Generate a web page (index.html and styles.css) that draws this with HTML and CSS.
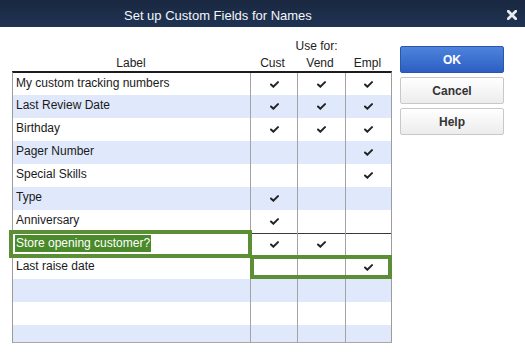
FILE: index.html
```html
<!DOCTYPE html>
<html lang="en">
<head>
<meta charset="utf-8">
<title>Set up Custom Fields for Names</title>
<link rel="stylesheet" href="styles.css">
</head>
<body>
<div class="dialog">
  <div class="titlebar">
    <span class="title">Set up Custom Fields for Names</span>
    <svg class="close" width="10" height="10" viewBox="0 0 10 10" aria-label="Close">
      <path d="M1.3 1.3 L8.7 8.7 M8.7 1.3 L1.3 8.7" stroke="#e8eaee" stroke-width="2.8" stroke-linecap="square"/>
    </svg>
  </div>
  <div class="main">
    <div class="table-wrap">
      <div class="head">
        <div class="usefor">Use for:</div>
        <div class="h-label">Label</div>
        <div class="h-col">Cust</div>
        <div class="h-col">Vend</div>
        <div class="h-col">Empl</div>
      </div>
      <div class="rows">
        <div class="row"><div class="cell label">My custom tracking numbers</div><div class="cell chk"><svg class="tick" viewBox="0 0 10 8"><path d="M1 4 L3.7 6.5 L9 1.3"/></svg></div><div class="cell chk"><svg class="tick" viewBox="0 0 10 8"><path d="M1 4 L3.7 6.5 L9 1.3"/></svg></div><div class="cell chk"><svg class="tick" viewBox="0 0 10 8"><path d="M1 4 L3.7 6.5 L9 1.3"/></svg></div></div>
        <div class="row alt"><div class="cell label">Last Review Date</div><div class="cell chk"><svg class="tick" viewBox="0 0 10 8"><path d="M1 4 L3.7 6.5 L9 1.3"/></svg></div><div class="cell chk"><svg class="tick" viewBox="0 0 10 8"><path d="M1 4 L3.7 6.5 L9 1.3"/></svg></div><div class="cell chk"><svg class="tick" viewBox="0 0 10 8"><path d="M1 4 L3.7 6.5 L9 1.3"/></svg></div></div>
        <div class="row"><div class="cell label">Birthday</div><div class="cell chk"><svg class="tick" viewBox="0 0 10 8"><path d="M1 4 L3.7 6.5 L9 1.3"/></svg></div><div class="cell chk"><svg class="tick" viewBox="0 0 10 8"><path d="M1 4 L3.7 6.5 L9 1.3"/></svg></div><div class="cell chk"><svg class="tick" viewBox="0 0 10 8"><path d="M1 4 L3.7 6.5 L9 1.3"/></svg></div></div>
        <div class="row alt"><div class="cell label">Pager Number</div><div class="cell chk"></div><div class="cell chk"></div><div class="cell chk"><svg class="tick" viewBox="0 0 10 8"><path d="M1 4 L3.7 6.5 L9 1.3"/></svg></div></div>
        <div class="row"><div class="cell label">Special Skills</div><div class="cell chk"></div><div class="cell chk"></div><div class="cell chk"><svg class="tick" viewBox="0 0 10 8"><path d="M1 4 L3.7 6.5 L9 1.3"/></svg></div></div>
        <div class="row alt"><div class="cell label">Type</div><div class="cell chk"><svg class="tick" viewBox="0 0 10 8"><path d="M1 4 L3.7 6.5 L9 1.3"/></svg></div><div class="cell chk"></div><div class="cell chk"></div></div>
        <div class="row"><div class="cell label">Anniversary</div><div class="cell chk"><svg class="tick" viewBox="0 0 10 8"><path d="M1 4 L3.7 6.5 L9 1.3"/></svg></div><div class="cell chk"></div><div class="cell chk"></div></div>
        <div class="row current"><div class="cell label sel-cell"><span class="selected">Store opening customer?</span></div><div class="cell chk"><svg class="tick" viewBox="0 0 10 8"><path d="M1 4 L3.7 6.5 L9 1.3"/></svg></div><div class="cell chk"><svg class="tick" viewBox="0 0 10 8"><path d="M1 4 L3.7 6.5 L9 1.3"/></svg></div><div class="cell chk"></div></div>
        <div class="row"><div class="cell label">Last raise date</div><div class="cell chk"></div><div class="cell chk"></div><div class="cell chk"><svg class="tick" viewBox="0 0 10 8"><path d="M1 4 L3.7 6.5 L9 1.3"/></svg></div></div>
        <div class="row alt"><div class="cell label"></div><div class="cell chk"></div><div class="cell chk"></div><div class="cell chk"></div></div>
        <div class="row"><div class="cell label"></div><div class="cell chk"></div><div class="cell chk"></div><div class="cell chk"></div></div>
        <div class="row alt last"><div class="cell label"></div><div class="cell chk"></div><div class="cell chk"></div><div class="cell chk"></div></div>
        <div class="mark mark-label"></div>
        <div class="mark mark-checks"></div>
      </div>
    </div>
    <div class="buttons">
      <button class="btn primary">OK</button>
      <button class="btn">Cancel</button>
      <button class="btn">Help</button>
    </div>
  </div>
</div>
</body>
</html>
```

FILE: styles.css
```css
html, body {
  margin: 0;
  padding: 0;
  background: #ffffff;
}

body {
  width: 525px;
  height: 361px;
  overflow: hidden;
  font-family: "Liberation Sans", Arial, sans-serif;
  font-size: 12px;
  color: #1a1a1a;
}

.dialog {
  width: 525px;
  height: 361px;
  background: #ffffff;
}

.titlebar {
  height: 27px;
  box-sizing: border-box;
  background: linear-gradient(#1a2840, #1f3353);
  display: flex;
  align-items: flex-start;
}

.title {
  margin-left: 124px;
  padding-top: 5px;
  line-height: 22px;
  font-size: 13px;
  color: #f4f6f9;
}

.close {
  margin-left: auto;
  margin-right: 8px;
  margin-top: 10px;
}

.main {
  display: flex;
  align-items: flex-start;
}

.table-wrap {
  margin-left: 12px;
  width: 380px;
}

.head {
  display: grid;
  grid-template-columns: 238px 47px 48px 47px;
  grid-template-rows: 18px 16px;
  padding-top: 10px;
  color: #222222;
}

.usefor {
  grid-column: 2 / span 3;
  grid-row: 1;
  text-align: center;
  line-height: 18px;
  padding-right: 9px;
}

.h-label,
.h-col {
  grid-row: 2;
  line-height: 16px;
  text-align: center;
}

.h-col {
  padding-right: 2px;
}

.rows {
  position: relative;
  border-top: 2px solid #1c1c1c;
  border-left: 1px solid #9c9c9c;
  border-right: 1px solid #9c9c9c;
  border-bottom: 1px solid #a8a8a8;
  height: 269px;
}

.row {
  display: grid;
  grid-template-columns: 237px 47px 48px 46px;
  height: 23px;
  background: #ffffff;
}

.row:first-child {
  height: 22px;
}

.row.alt {
  background: #e0e9fb;
}

.row.last {
  height: 17px;
}

.row.current {
  box-shadow: inset 0 1px 0 #3a3a3a;
}

.cell {
  box-sizing: border-box;
  line-height: 21px;
  white-space: nowrap;
  overflow: hidden;
}

.label {
  padding-left: 3px;
}

.row:first-child .label {
  line-height: 20px;
}

.chk {
  border-left: 1px solid #a3a3a3;
  display: flex;
  align-items: center;
  justify-content: center;
}

.tick {
  width: 9px;
  height: 7px;
  fill: none;
  stroke: #222222;
  stroke-width: 2.3;
  stroke-linecap: round;
  stroke-linejoin: miter;
}

.sel-cell {
  padding-top: 2px;
}

.selected {
  display: inline-block;
  vertical-align: top;
  line-height: 17px;
  margin-left: -1px;
  padding: 0 1px;
  background: #4a8a2a;
  color: #ffffff;
}

.mark {
  position: absolute;
  box-sizing: border-box;
  border: 4px solid #5b8e35;
}

.mark-label {
  left: -4px;
  top: 157px;
  width: 243px;
  height: 28px;
}

.mark-checks {
  left: 237px;
  top: 182px;
  width: 142px;
  height: 24px;
}

.buttons {
  margin-left: 8px;
  margin-top: 19px;
  display: flex;
  flex-direction: column;
  gap: 4px;
}

.btn {
  width: 104px;
  height: 27px;
  box-sizing: border-box;
  padding: 0;
  font-family: "Liberation Sans", Arial, sans-serif;
  font-size: 12px;
  font-weight: bold;
  color: #333333;
  background: linear-gradient(#ffffff, #ececec);
  border: 1px solid #c8c8c8;
  border-radius: 2px;
}

.btn.primary {
  color: #ffffff;
  background: linear-gradient(#4d84dc, #2d5ec3);
  border: 1px solid #2a56ad;
}
```
